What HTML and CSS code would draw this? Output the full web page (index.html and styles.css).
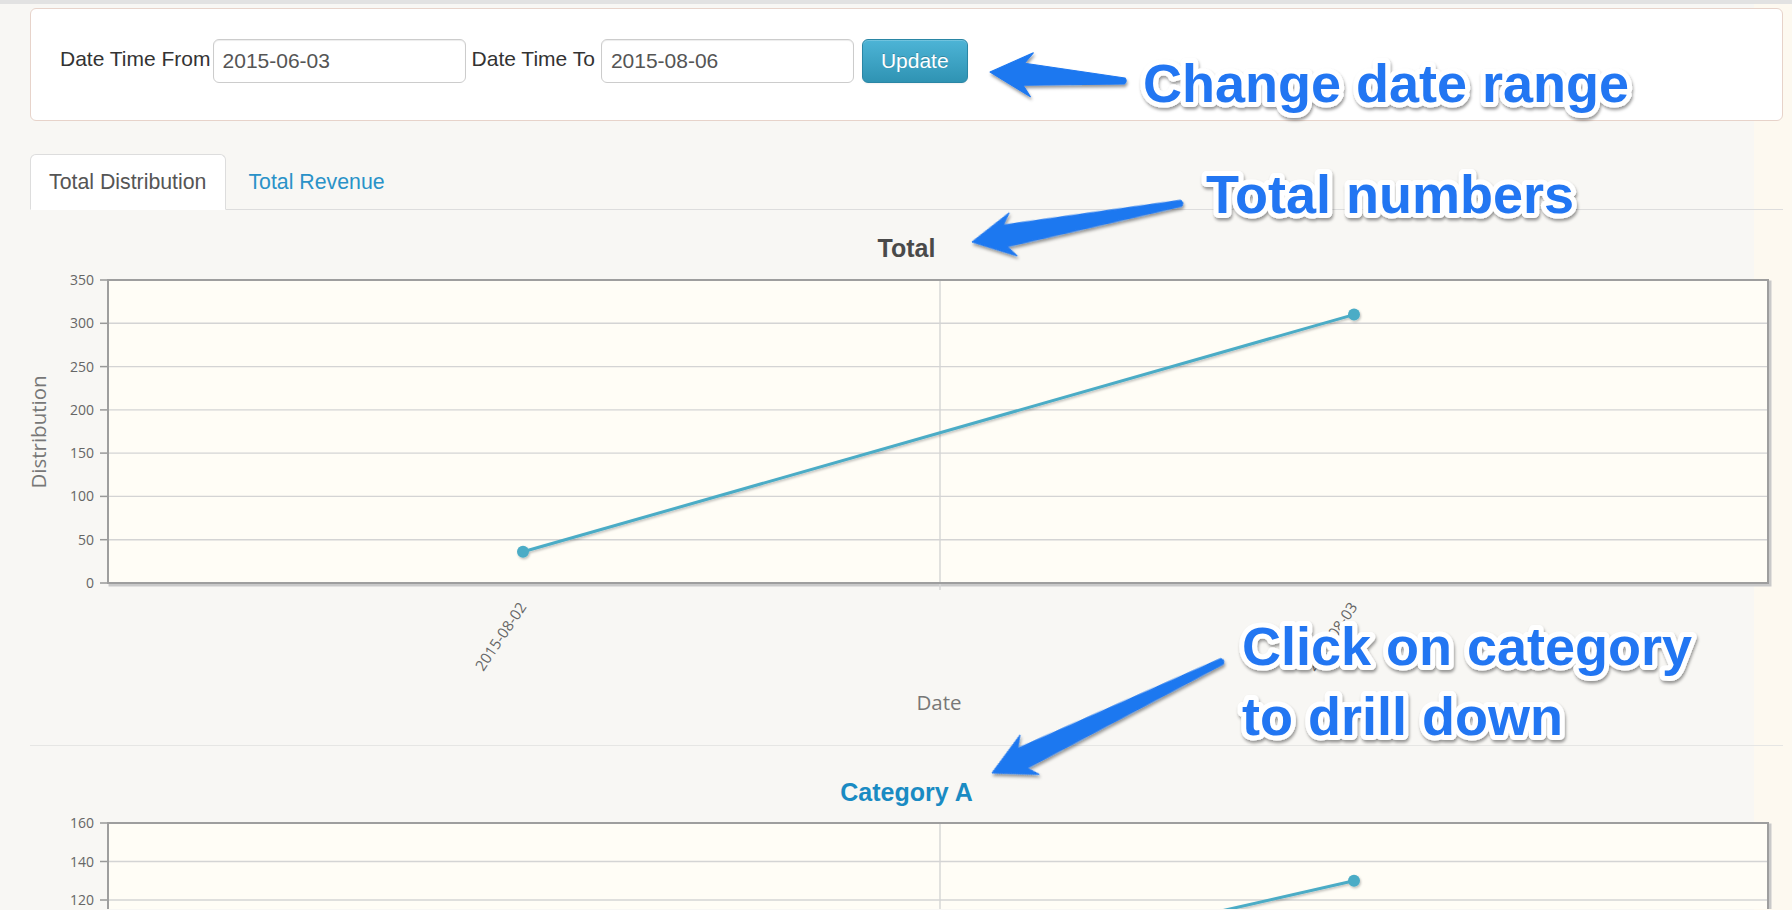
FILE: index.html
```html
<!DOCTYPE html>
<html>
<head>
<meta charset="utf-8">
<title>Distribution</title>
<link rel="stylesheet" href="styles.css">
</head>
<body>
<div class="topbar"></div>
<div class="page">
  <form class="well">
    <label class="lbl">Date Time From</label>
    <input class="inp" type="text" value="2015-06-03">
    <label class="lbl lbl-2">Date Time To</label>
    <input class="inp" type="text" value="2015-08-06">
    <button class="btn" type="button">Update</button>
  </form>

  <ul class="tabs">
    <li class="tab active">Total Distribution</li>
    <li class="tab"><a href="#">Total Revenue</a></li>
  </ul>

  <div class="chart-box">
    <svg class="chart chart-open" width="1753" height="535" viewBox="0 0 1753 535">
      <defs>
        <filter id="lsh" x="-5%" y="-50%" width="110%" height="200%">
          <feDropShadow dx="1" dy="1.5" stdDeviation="1" flood-color="#000" flood-opacity="0.25"/>
        </filter>
      </defs>
      <text class="ctitle" x="876.5" y="47" text-anchor="middle">Total</text>
      <rect x="80" y="72" width="1660" height="303" fill="none" stroke="#c9c9c9" stroke-width="3"/>
      <rect x="78" y="70" width="1660" height="303" fill="#fffdf6"/>
      <g class="grid">
        <line x1="78" x2="1738" y1="113.3" y2="113.3"/>
        <line x1="78" x2="1738" y1="156.6" y2="156.6"/>
        <line x1="78" x2="1738" y1="199.9" y2="199.9"/>
        <line x1="78" x2="1738" y1="243.1" y2="243.1"/>
        <line x1="78" x2="1738" y1="286.4" y2="286.4"/>
        <line x1="78" x2="1738" y1="329.7" y2="329.7"/>
        <line x1="910" x2="910" y1="70" y2="380"/>
      </g>
      <g class="ticks">
        <line x1="70" x2="78" y1="70" y2="70"/>
        <line x1="70" x2="78" y1="113.3" y2="113.3"/>
        <line x1="70" x2="78" y1="156.6" y2="156.6"/>
        <line x1="70" x2="78" y1="199.9" y2="199.9"/>
        <line x1="70" x2="78" y1="243.1" y2="243.1"/>
        <line x1="70" x2="78" y1="286.4" y2="286.4"/>
        <line x1="70" x2="78" y1="329.7" y2="329.7"/>
        <line x1="70" x2="78" y1="373" y2="373"/>
      </g>
      <rect x="78" y="70" width="1660" height="303" fill="none" stroke="#9e9e9e" stroke-width="2"/>
      <g class="ylab" text-anchor="end">
        <text x="64" y="75">350</text>
        <text x="64" y="118.3">300</text>
        <text x="64" y="161.6">250</text>
        <text x="64" y="204.9">200</text>
        <text x="64" y="248.1">150</text>
        <text x="64" y="291.4">100</text>
        <text x="64" y="334.7">50</text>
        <text x="64" y="378">0</text>
      </g>
      <text class="atitle" x="16" y="222" text-anchor="middle" transform="rotate(-90 16 222)">Distribution</text>
      <g class="xlab" text-anchor="end">
        <text x="497" y="397" transform="rotate(-56 497 397)">2015-08-02</text>
        <text x="1328" y="397" transform="rotate(-56 1328 397)">2015-08-03</text>
      </g>
      <text class="atitle" x="909" y="500" text-anchor="middle">Date</text>
      <g class="series" filter="url(#lsh)">
        <polyline points="493,341.8 1324,104.6"/>
        <circle cx="493" cy="341.8" r="6"/>
        <circle cx="1324" cy="104.6" r="6"/>
      </g>
    </svg>
  </div>

  <div class="chart-box chart-sep">
    <svg class="chart" width="1753" height="163" viewBox="0 0 1753 163">
      <text class="ctitle ctitle-link" x="876.5" y="54.5" text-anchor="middle">Category A</text>
      <rect x="80" y="79" width="1660" height="308" fill="none" stroke="#c9c9c9" stroke-width="3"/>
      <rect x="78" y="77" width="1660" height="308" fill="#fffdf6"/>
      <g class="grid">
        <line x1="78" x2="1738" y1="115.5" y2="115.5"/>
        <line x1="78" x2="1738" y1="154" y2="154"/>
        <line x1="910" x2="910" y1="77" y2="392"/>
      </g>
      <g class="ticks">
        <line x1="70" x2="78" y1="77" y2="77"/>
        <line x1="70" x2="78" y1="115.5" y2="115.5"/>
        <line x1="70" x2="78" y1="154" y2="154"/>
      </g>
      <rect x="78" y="77" width="1660" height="308" fill="none" stroke="#9e9e9e" stroke-width="2"/>
      <g class="ylab" text-anchor="end">
        <text x="64" y="82">160</text>
        <text x="64" y="120.5">140</text>
        <text x="64" y="159">120</text>
      </g>
      <g class="series" filter="url(#lsh)">
        <polyline points="493,323.4 1324,134.8"/>
        <circle cx="1324" cy="134.8" r="6"/>
      </g>
    </svg>
  </div>
</div>

<svg class="annot" width="1792" height="910" viewBox="0 0 1792 910">
  <defs>
    <filter id="ash" x="-10%" y="-30%" width="120%" height="170%">
      <feDropShadow dx="1" dy="2.5" stdDeviation="1.6" flood-color="#000" flood-opacity="0.4"/>
    </filter>
  </defs>
  <g filter="url(#ash)">
    <path class="arrow" transform="translate(990 72) rotate(3.8)" d="M0 0 L42 -22 L34 -11 L135 -3 Q138 0 135 3 L34 11 L42 22 Z"/>
    <path class="arrow" transform="translate(972 242) rotate(-10.5)" d="M0 0 L42 -22 L34 -11 L213 -3 Q216 0 213 3 L34 11 L42 22 Z"/>
    <path class="arrow" transform="translate(992 773) rotate(-25.9)" d="M0 0 L42 -22 L34 -11 L256 -3 Q259 0 256 3 L34 11 L42 22 Z"/>
    <text class="note" x="1143" y="102">Change date range</text>
    <text class="note" x="1206" y="213">Total numbers</text>
    <text class="note" x="1242" y="665">Click on category</text>
    <text class="note" x="1242" y="735">to drill down</text>
  </g>
</svg>
</body>
</html>
```

FILE: styles.css
```css
html, body {
  margin: 0;
  padding: 0;
  overflow: hidden;
}

body {
  position: relative;
  height: 910px;
  background: linear-gradient(to right, #f8f7f4 0, #f8f7f4 1754px, #fdf9f0 1754px);
  font-family: "Liberation Sans", Arial, Helvetica, sans-serif;
  color: #333;
}

.topbar {
  height: 4px;
  background: #e2e2e2;
}

.page {
  width: 1753px;
  padding-left: 30px;
}

/* filter form */
.well {
  margin: 4px 0 0;
  display: flex;
  align-items: center;
  background: #fff;
  border: 1px solid #e7d3ca;
  border-radius: 6px;
  padding: 30px 29px 37px;
}

.lbl {
  font-size: 21px;
  line-height: 30px;
  color: #333;
  margin: 0 2px 4px 0;
}

.lbl-2 {
  margin-left: 6px;
  margin-right: 6px;
}

.inp {
  box-sizing: border-box;
  width: 253px;
  height: 44px;
  padding: 6px 9px;
  border: 1px solid #cccccc;
  border-radius: 6px;
  font-family: "Liberation Sans", Arial, sans-serif;
  font-size: 21px;
  line-height: 30px;
  color: #555;
  background: #fff;
  box-shadow: inset 0 1px 1px rgba(0, 0, 0, 0.075);
  outline: none;
}

.btn {
  margin-left: 8px;
  height: 44px;
  padding: 6px 18px;
  border: 1px solid #2a86a5;
  border-radius: 6px;
  background: linear-gradient(to bottom, #4db4d6, #2f93b3);
  color: #fff;
  font-family: "Liberation Sans", Arial, sans-serif;
  font-size: 21px;
  line-height: 30px;
  text-shadow: 0 -1px 0 rgba(0, 0, 0, 0.2);
  box-shadow: inset 0 1px 0 rgba(255, 255, 255, 0.2), 0 1px 2px rgba(0, 0, 0, 0.05);
}

/* tabs */
.tabs {
  list-style: none;
  margin: 33px 0 0;
  padding: 0;
  display: flex;
  border-bottom: 1px solid #dddddd;
}

.tab {
  margin: 0 3px -1px 0;
  padding: 12px 19px 12px 18px;
  font-size: 21.3px;
  line-height: 30px;
  border: 1px solid transparent;
  border-radius: 6px 6px 0 0;
}

.tab.active {
  background: #fff;
  border-color: #dddddd #dddddd transparent;
  color: #555;
}

.tab a {
  color: #2a92c8;
  text-decoration: none;
}

/* charts */
.chart-box {
  height: 535px;
}

.chart-sep {
  border-top: 1px solid #e6e6e4;
  height: 163px;
}

.chart {
  display: block;
  overflow: hidden;
}

.chart-open {
  overflow: visible;
}

.ctitle {
  font-family: "Liberation Sans", Arial, sans-serif;
  font-weight: bold;
  font-size: 25px;
  fill: #4a4a4a;
}

.ctitle-link {
  fill: #1a8bc3;
}

.grid line {
  stroke: #d4d4d4;
  stroke-width: 1.4;
}

.ticks line {
  stroke: #999;
  stroke-width: 1.5;
}

.ylab text {
  font-family: "Open Sans", "Noto Sans", sans-serif;
  font-size: 14px;
  fill: #666;
}

.xlab text {
  font-family: "Open Sans", "Noto Sans", sans-serif;
  font-size: 15px;
  fill: #666;
}

.atitle {
  font-family: "Open Sans", "Noto Sans", sans-serif;
  font-size: 20.5px;
  fill: #777;
}

.series polyline {
  fill: none;
  stroke: #4bacc6;
  stroke-width: 3;
}

.series circle {
  fill: #4bacc6;
}

/* annotations layer */
.annot {
  position: absolute;
  left: 0;
  top: 0;
  pointer-events: none;
}

.arrow {
  fill: #1f78f0;
  stroke: #1f78f0;
  stroke-width: 1;
  stroke-linejoin: round;
}

.note {
  font-family: "Liberation Sans", Arial, sans-serif;
  font-weight: bold;
  font-size: 54px;
  fill: #2176f2;
  stroke: #ffffff;
  stroke-width: 10;
  stroke-linejoin: round;
  paint-order: stroke;
}
```
